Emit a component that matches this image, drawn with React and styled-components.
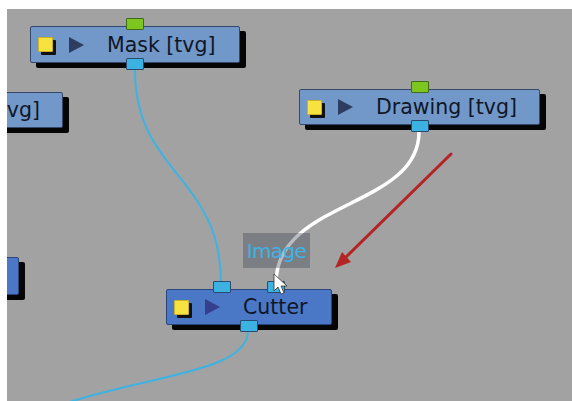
import React from "react";
import styled, { createGlobalStyle } from "styled-components";

const Global = createGlobalStyle`
  html, body { margin: 0; padding: 0; background: #ffffff; }
  body { width: 572px; height: 401px; overflow: hidden; }
`;

const Frame = styled.div`
  width: 572px;
  height: 401px;
  padding: 9px 0 0 7px;
  box-sizing: border-box;
  background: #ffffff;
`;

const Canvas = styled.div`
  position: relative;
  width: 565px;
  height: 392px;
  background: #a2a2a2;
  overflow: hidden;
  font-family: "DejaVu Sans", "Liberation Sans", sans-serif;
`;

const Layer = styled.svg`
  position: absolute;
  left: 0;
  top: 0;
  width: 565px;
  height: 392px;
  z-index: ${(p) => p.$z};
  pointer-events: none;
`;

const NodeBox = styled.div`
  position: absolute;
  box-sizing: border-box;
  height: ${(p) => p.$h}px;
  display: flex;
  align-items: center;
  padding-left: 7px;
  background: ${(p) => (p.$selected ? "#4b78c6" : "#7298c9")};
  border: 1.5px solid ${(p) => (p.$selected ? "#28467c" : "#34496a")};
  border-radius: 2px;
  box-shadow: 6px 5px 0 #050505;
  z-index: 1;
`;

const Swatch = styled.span`
  flex: none;
  width: 15px;
  height: 15px;
  box-sizing: border-box;
  background: #f7e23f;
  border: 1px solid #c9b12a;
  border-radius: 1px;
  box-shadow: 3px 3px 0 #111;
`;

const Play = styled.span`
  flex: none;
  width: 0;
  height: 0;
  margin-left: 16px;
  border-top: 8px solid transparent;
  border-bottom: 8px solid transparent;
  border-left: 15px solid ${(p) => (p.$selected ? "#363f8c" : "#2d3d62")};
`;

const Title = styled.span`
  margin-left: 23px;
  font-size: 20.5px;
  color: #0f1626;
  white-space: nowrap;
  line-height: 1;
  padding-top: 1px;
`;

const Port = styled.span`
  position: absolute;
  box-sizing: border-box;
  width: 18px;
  height: 12px;
  left: calc(${(p) => p.$at}% - 9px);
  ${(p) => (p.$side === "top" ? "top: -9px;" : "bottom: -8px;")}
  background: ${(p) => (p.$kind === "green" ? "#7cc61f" : "#3cb2e2")};
  border: 1.5px solid ${(p) => (p.$kind === "green" ? "#3f6a1c" : "#294a6e")};
  border-radius: 1px;
`;

const Tip = styled.div`
  position: absolute;
  left: 236px;
  top: 224px;
  width: 67px;
  height: 35px;
  box-sizing: border-box;
  display: flex;
  align-items: center;
  justify-content: center;
  background: rgba(40, 52, 66, 0.32);
  color: #3fb3e6;
  font-size: 20px;
  letter-spacing: -0.6px;
  z-index: 2;
`;

function Node({ x, y, w, h = 36, title, selected, top = [], bottom = [] }) {
  return (
    <NodeBox $selected={selected} $h={h} style={{ left: x - 7, top: y - 9, width: w }}>
      <Swatch />
      <Play $selected={selected} />
      <Title>{title}</Title>
      {top.map((p, i) => (
        <Port key={"t" + i} $side="top" $at={p.at} $kind={p.kind} />
      ))}
      {bottom.map((p, i) => (
        <Port key={"b" + i} $side="bottom" $at={p.at} $kind={p.kind} />
      ))}
    </NodeBox>
  );
}

export default function App() {
  return (
    <>
      <Global />
      <Frame>
        <Canvas>
          <Layer $z={0} viewBox="7 9 565 392">
            <path d="M135,69 C135,175 221,175 221,283" fill="none" stroke="#3db3e4" strokeWidth="2" />
            <path d="M248,332 C246,372 150,375 60,405" fill="none" stroke="#3db3e4" strokeWidth="2" />
            <path d="M419,132 C419,208 276,200 276,283" fill="none" stroke="#ffffff" strokeWidth="3.5" />
          </Layer>

          <Node x={30} y={26} w={210} h={37} title="Mask [tvg]"
            top={[{ at: 50, kind: "green" }]} bottom={[{ at: 50, kind: "blue" }]} />
          <Node x={-178} y={92} w={241} title="Drawing [tvg]" />
          <Node x={299} y={89} w={241} title="Drawing [tvg]"
            top={[{ at: 50, kind: "green" }]} bottom={[{ at: 50, kind: "blue" }]} />
          <Node x={-147} y={257} w={166} h={38} title="Cutter" selected />
          <Node x={166} y={289} w={166} title="Cutter" selected
            top={[{ at: 33.4, kind: "blue" }, { at: 66.7, kind: "blue" }]}
            bottom={[{ at: 50, kind: "blue" }]} />

          <Tip>Image</Tip>

          <Layer $z={3} viewBox="7 9 565 392">
            <line x1="451" y1="154" x2="345" y2="258" stroke="#b42424" strokeWidth="3" strokeLinecap="round" />
            <polygon points="335,268 351,262 342,252" fill="#b42424" />
            <path d="M274,274 L274,291 L278,287 L281,294 L284,293 L281,286 L287,286 Z"
              fill="#ffffff" stroke="#333" strokeWidth="0.8" strokeLinejoin="round" />
          </Layer>
        </Canvas>
      </Frame>
    </>
  );
}
